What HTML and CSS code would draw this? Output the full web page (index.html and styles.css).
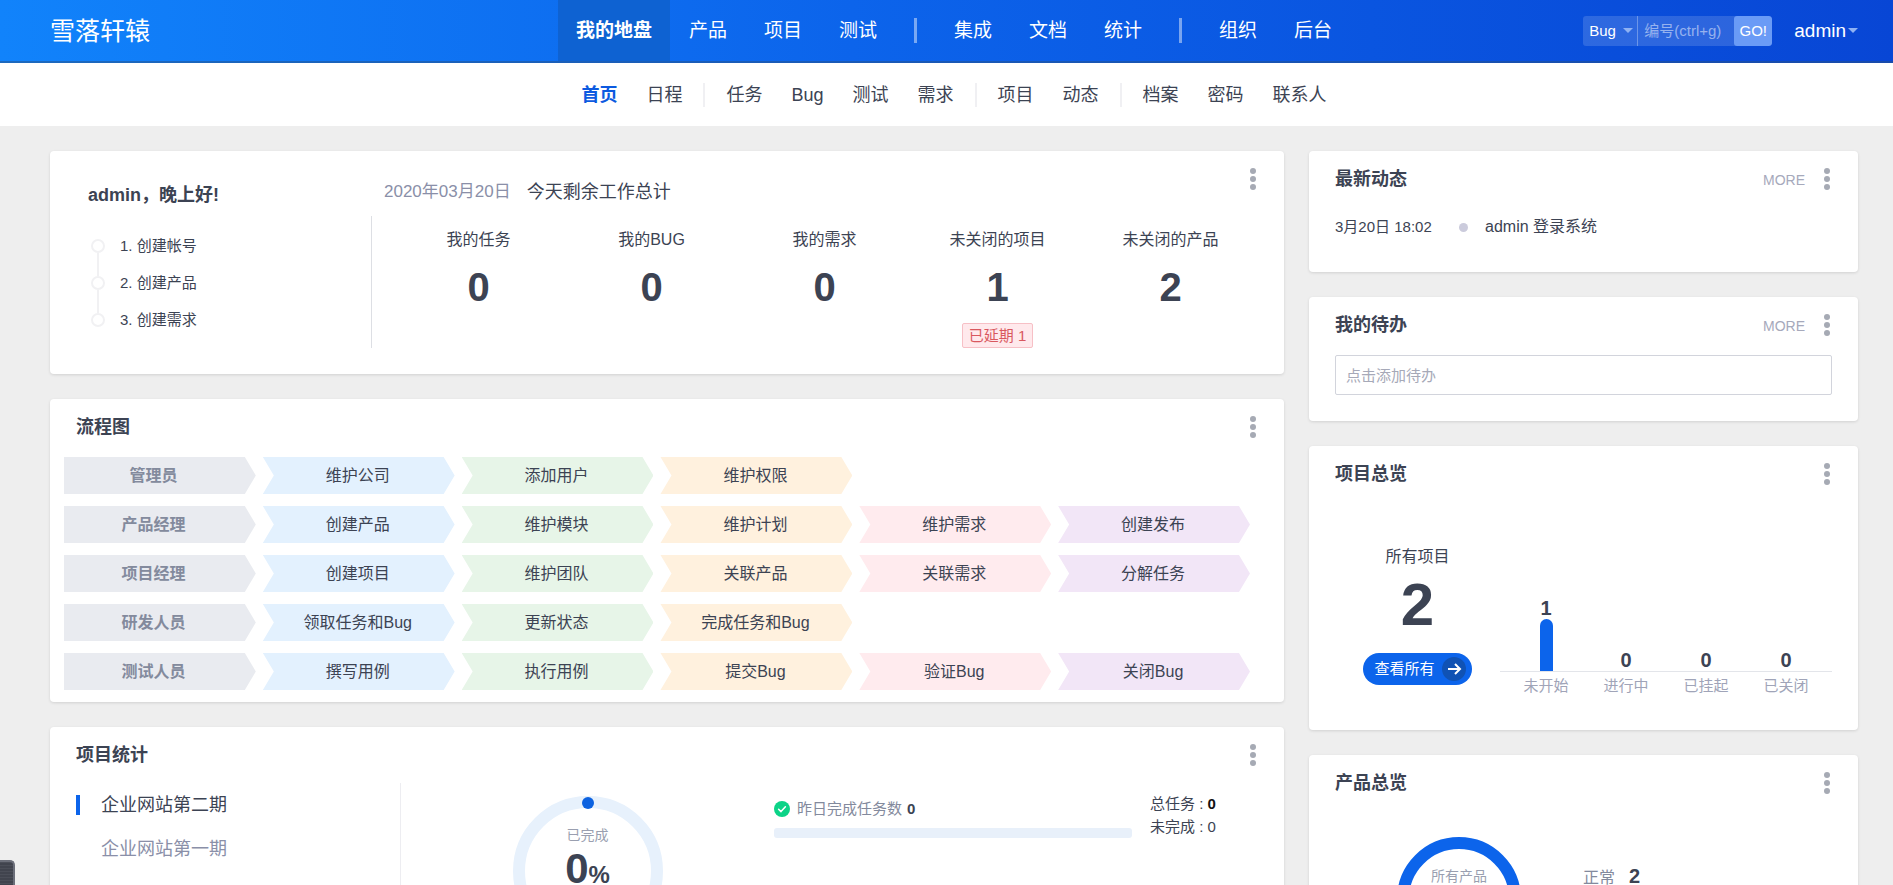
FILE: index.html
```html
<!DOCTYPE html>
<html lang="zh-CN">
<head>
<meta charset="utf-8">
<title>我的地盘</title>
<link rel="stylesheet" href="styles.css">
</head>
<body>
<header class="topbar">
  <a class="brand" href="#">雪落轩辕</a>
  <nav class="mainnav" aria-label="主导航">
    <a class="active" href="#">我的地盘</a>
    <a href="#">产品</a>
    <a href="#">项目</a>
    <a href="#">测试</a>
    <span class="sep"></span>
    <a href="#">集成</a>
    <a href="#">文档</a>
    <a href="#">统计</a>
    <span class="sep"></span>
    <a href="#">组织</a>
    <a href="#">后台</a>
  </nav>
  <div class="tools">
    <form class="search">
      <div class="kind">
        <select aria-label="类型"><option>Bug</option></select>
        <span class="caret"></span>
      </div>
      <input type="text" aria-label="编号" placeholder="编号(ctrl+g)">
      <button type="button">GO!</button>
    </form>
    <button class="user" type="button">admin<span class="caret"></span></button>
  </div>
</header>
<nav class="subnav" aria-label="子导航">
  <a class="active" href="#">首页</a>
  <a href="#">日程</a>
  <span class="sep"></span>
  <a href="#">任务</a>
  <a href="#">Bug</a>
  <a href="#">测试</a>
  <a href="#">需求</a>
  <span class="sep"></span>
  <a href="#">项目</a>
  <a href="#">动态</a>
  <span class="sep"></span>
  <a href="#">档案</a>
  <a href="#">密码</a>
  <a href="#">联系人</a>
</nav>

<main class="board">
  <div class="col">
    <section class="card welcome">
      <div class="greet">
        <h2>admin，晚上好!</h2>
        <ol class="steps">
          <li>1. 创建帐号</li>
          <li>2. 创建产品</li>
          <li>3. 创建需求</li>
        </ol>
      </div>
      <div class="summary">
        <p class="today"><time>2020年03月20日</time><span>今天剩余工作总计</span></p>
        <div class="tiles">
          <div class="tile"><span>我的任务</span><strong>0</strong></div>
          <div class="tile"><span>我的BUG</span><strong>0</strong></div>
          <div class="tile"><span>我的需求</span><strong>0</strong></div>
          <div class="tile"><span>未关闭的项目</span><strong>1</strong><em class="late">已延期 1</em></div>
          <div class="tile"><span>未关闭的产品</span><strong>2</strong></div>
        </div>
      </div>
      <button class="dots" type="button" aria-label="更多操作"><i></i><i></i><i></i></button>
    </section>

    <section class="card">
      <div class="head"><h2>流程图</h2><button class="dots" type="button" aria-label="更多操作"><i></i><i></i><i></i></button></div>
      <div class="flow">
        <div class="lane"><b>管理员</b><a href="#">维护公司</a><a href="#">添加用户</a><a href="#">维护权限</a></div>
        <div class="lane"><b>产品经理</b><a href="#">创建产品</a><a href="#">维护模块</a><a href="#">维护计划</a><a href="#">维护需求</a><a href="#">创建发布</a></div>
        <div class="lane"><b>项目经理</b><a href="#">创建项目</a><a href="#">维护团队</a><a href="#">关联产品</a><a href="#">关联需求</a><a href="#">分解任务</a></div>
        <div class="lane"><b>研发人员</b><a href="#">领取任务和Bug</a><a href="#">更新状态</a><a href="#">完成任务和Bug</a></div>
        <div class="lane"><b>测试人员</b><a href="#">撰写用例</a><a href="#">执行用例</a><a href="#">提交Bug</a><a href="#">验证Bug</a><a href="#">关闭Bug</a></div>
      </div>
    </section>

    <section class="card">
      <div class="head"><h2>项目统计</h2><button class="dots" type="button" aria-label="更多操作"><i></i><i></i><i></i></button></div>
      <div class="stats">
        <ul class="projects">
          <li><a class="active" href="#">企业网站第二期</a></li>
          <li><a href="#">企业网站第一期</a></li>
        </ul>
        <div class="ringbox">
          <div class="ring">
            <svg viewBox="0 0 150 150" aria-hidden="true"><circle cx="75" cy="75" r="69" fill="none" stroke="#e7f1fc" stroke-width="12"/><circle cx="75" cy="7" r="6" fill="#0c62e0"/></svg>
            <div class="ringtext"><small>已完成</small><strong>0<sub>%</sub></strong></div>
          </div>
        </div>
        <div class="done">
          <p><svg class="tick" viewBox="0 0 16 16" aria-hidden="true"><circle cx="8" cy="8" r="8" fill="#0cd387"/><path d="M4.6 8.2 7 10.6 11.4 5.8" fill="none" stroke="#fff" stroke-width="1.5" stroke-linecap="round" stroke-linejoin="round"/></svg>昨日完成任务数 <b>0</b></p>
          <div class="bar"></div>
        </div>
        <div class="totals">
          <p>总任务 : <b>0</b></p>
          <p>未完成 : 0</p>
        </div>
      </div>
    </section>
  </div>

  <div class="col">
    <section class="card news">
      <div class="head"><h2>最新动态</h2><a class="more" href="#">MORE</a><button class="dots" type="button" aria-label="更多操作"><i></i><i></i><i></i></button></div>
      <p class="event"><time>3月20日 18:02</time><i></i><a href="#">admin 登录系统</a></p>
    </section>

    <section class="card todo">
      <div class="head"><h2>我的待办</h2><a class="more" href="#">MORE</a><button class="dots" type="button" aria-label="更多操作"><i></i><i></i><i></i></button></div>
      <div class="field"><input type="text" aria-label="添加待办" placeholder="点击添加待办"></div>
    </section>

    <section class="card">
      <div class="head"><h2>项目总览</h2><button class="dots" type="button" aria-label="更多操作"><i></i><i></i><i></i></button></div>
      <div class="overview">
        <div class="all">
          <span>所有项目</span>
          <strong>2</strong>
          <a class="pill" href="#">查看所有<svg viewBox="0 0 24 24" aria-hidden="true"><circle cx="12" cy="12" r="12" fill="#1052b4"/><path d="M6 12h12M13 7l5 5-5 5" fill="none" stroke="#fff" stroke-width="2"/></svg></a>
        </div>
        <div class="chart">
          <div class="plot">
            <div class="bin"><b>1</b><i style="height:52px"></i></div>
            <div class="bin"><b>0</b></div>
            <div class="bin"><b>0</b></div>
            <div class="bin"><b>0</b></div>
          </div>
          <div class="labels"><span>未开始</span><span>进行中</span><span>已挂起</span><span>已关闭</span></div>
        </div>
      </div>
    </section>

    <section class="card">
      <div class="head"><h2>产品总览</h2><button class="dots" type="button" aria-label="更多操作"><i></i><i></i><i></i></button></div>
      <div class="products">
        <div class="donut">
          <svg viewBox="0 0 124 124" aria-hidden="true"><circle cx="62" cy="62" r="56" fill="none" stroke="#0c64eb" stroke-width="12"/></svg>
          <div class="donuttext"><small>所有产品</small><strong>2</strong></div>
        </div>
        <p class="legend">正常<b>2</b></p>
      </div>
    </section>
  </div>
</main>
<div class="sidetab"></div>
</body>
</html>
```
FILE: styles.css
```css
*, *::before, *::after { box-sizing: border-box; }
body {
  margin: 0;
  background: #eeeeee;
  color: #3c4353;
  font: 16px/24px "Liberation Sans", "Noto Sans CJK SC", sans-serif;
}
h2, p, ol, ul { margin: 0; padding: 0; list-style: none; }
h2 { font-size: 18px; line-height: 24px; }
a { color: inherit; text-decoration: none; }
button, input, select { font: inherit; color: inherit; border: 0; padding: 0; background: none; }
i, em { font-style: normal; }
svg { display: block; }

.topbar {
  display: grid;
  grid-template-columns: 1fr auto 1fr;
  align-items: center;
  height: 63px;
  padding: 0 35px 0 50px;
  color: #fff;
  background: linear-gradient(90deg, #1183fb 0%, #0c64eb 45%, #0846d5 100%);
  background-origin: border-box;
  border-bottom: 2px solid rgba(40, 80, 130, .5);
}
.brand { font-size: 25px; }
.mainnav { display: flex; align-items: center; gap: 1px; font-size: 19px; line-height: 61px; }
.mainnav a { padding: 0 18px; }
.mainnav .active { background: #0e62d2; font-weight: bold; }
.mainnav .sep { width: 3px; height: 25px; margin: 0 18px; background: rgba(255, 255, 255, .45); }
.tools { display: flex; justify-content: flex-end; align-items: center; gap: 22px; }
.caret { border: 5px solid transparent; border-top-color: #8fb2f3; border-bottom: 0; }
.search { display: flex; height: 30px; font-size: 15px; border-radius: 3px; overflow: hidden; background: rgba(255, 255, 255, .15); }
.kind { display: grid; align-items: center; width: 55px; border-right: 1px solid rgba(255, 255, 255, .3); }
.kind > * { grid-area: 1 / 1; }
.kind select { width: 100%; height: 30px; padding: 0 6px; appearance: none; }
.kind .caret { justify-self: end; margin-right: 4px; pointer-events: none; }
.search input { width: 96px; padding: 0 6px; }
.search input::placeholder { color: rgba(255, 255, 255, .5); opacity: 1; }
.search button { width: 38px; background: #6a9bf6; border-radius: 3px; }
.user { display: flex; align-items: center; gap: 2px; font-size: 19px; }

.subnav {
  display: flex;
  justify-content: center;
  align-items: center;
  gap: 1px;
  height: 63px;
  padding: 0 35px 0 50px;
  background: #fff;
  font-size: 18px;
}
.subnav a { padding: 0 14px; }
.subnav .active { color: #0c5ae0; font-weight: bold; }
.subnav .sep { width: 2px; height: 24px; margin: 0 6px; background: #f0f0f3; }

.board { display: grid; grid-template-columns: 1234fr 549fr; gap: 25px; padding: 25px 35px 25px 50px; }
.col { display: flex; flex-direction: column; gap: 25px; min-width: 0; }
.card { background: #fff; border-radius: 4px; box-shadow: 0 1px 3px rgba(0, 0, 0, .12); }
.head { display: flex; align-items: center; height: 56px; padding: 0 25px 0 26px; }
.head h2 { flex: 1; }
.dots { display: flex; flex-direction: column; align-items: center; gap: 2px; width: 12px; margin-left: 16px; }
.dots i { width: 6px; height: 6px; border-radius: 3px; background: #a6aab4; }
.more { font-size: 14px; line-height: 22px; padding-top: 2px; color: #a6a9bb; }

.welcome { display: flex; height: 223px; padding: 17px 25px 28px 38px; }
.greet { display: flex; flex-direction: column; width: 283px; padding-top: 15px; }
.steps { display: flex; flex-direction: column; gap: 13px; margin-top: 27px; font-size: 15px; }
.steps li { position: relative; padding-left: 32px; }
.steps li::before { content: ""; position: absolute; left: 3px; top: 5px; width: 14px; height: 14px; border: 2px solid #f1f1f3; border-radius: 7px; }
.steps li + li::after { content: ""; position: absolute; left: 9px; top: -18px; width: 2px; height: 23px; background: #f1f1f3; }
.summary { flex: 1; display: flex; flex-direction: column; }
.today { display: flex; gap: 16px; padding: 12px 0 12px 13px; font-size: 18px; }
.today time { font-size: 17px; color: #8a8fa8; }
.tiles { flex: 1; display: grid; grid-template-columns: repeat(5, 1fr); padding: 12px 2px 0 20px; border-left: 1px solid #dddfe4; }
.tile { display: flex; flex-direction: column; align-items: center; }
.tile strong { font-size: 40px; line-height: 48px; margin: 11px 0 12px; }
.late { font-size: 15px; line-height: 23px; padding: 0 6px; color: #d9585f; background: #ffe9ec; border: 1px solid #f7c0c6; border-radius: 2px; }
.welcome .dots { align-self: flex-start; margin-left: -12px; }

.flow { display: grid; gap: 12px; padding: 2px 34px 12px 14px; }
.lane { display: grid; grid-template-columns: repeat(6, 1fr); gap: 7px; text-align: center; line-height: 37px; }
.lane b { padding-right: 13px; color: #838a9d; background: #e9ebf0; clip-path: polygon(0 0, calc(100% - 11px) 0, 100% 50%, calc(100% - 11px) 100%, 0 100%); }
.lane a { padding-right: 2px; clip-path: polygon(0 0, calc(100% - 11px) 0, 100% 50%, calc(100% - 11px) 100%, 0 100%, 11px 50%); }
.lane a:nth-child(2) { background: #e3f1fe; }
.lane a:nth-child(3) { background: #e7f5e8; }
.lane a:nth-child(4) { background: #fff1de; }
.lane a:nth-child(5) { background: #ffebee; }
.lane a:nth-child(6) { background: #f2e6f7; }

.stats { display: grid; grid-template-columns: 351px 373px 1fr 152px; min-height: 190px; padding-bottom: 20px; }
.projects { display: grid; align-content: start; gap: 24px; padding: 12px 0 0 26px; border-right: 1px solid #ededf1; font-size: 18px; line-height: 20px; }
.projects a { display: block; padding-left: 21px; border-left: 4px solid transparent; color: #8a8fa8; }
.projects .active { border-color: #0c64eb; color: #3c4353; }
.ringbox { display: flex; justify-content: center; padding-top: 13px; }
.ring, .donut { position: relative; width: 150px; height: 150px; }
.ringtext, .donuttext { position: absolute; inset: 0; display: flex; flex-direction: column; align-items: center; }
.ringtext { padding-top: 27px; }
.ringtext small, .donuttext small { font-size: 14px; line-height: 24px; color: #9a9fb0; }
.ringtext strong { font-size: 42px; line-height: 44px; }
.ringtext sub { font-size: 24px; vertical-align: baseline; }
.done { padding-top: 15px; font-size: 15px; color: #838a9d; }
.done p { display: flex; align-items: center; gap: 5px; line-height: 22px; }
.done b { color: #3c4353; }
.tick { width: 16px; height: 16px; margin-right: 2px; }
.bar { height: 10px; margin-top: 8px; border-radius: 3px; background: #e8f0fa; }
.totals { padding: 9px 0 0 18px; font-size: 15px; line-height: 23px; }
.totals b { color: #111; }

.news { padding-bottom: 33px; }
.event { display: flex; align-items: center; padding: 8px 26px 0; }
.event time { width: 124px; font-size: 15px; }
.event i { width: 9px; height: 9px; margin-right: 17px; border-radius: 5px; background: #cbcbdc; }
.todo .field { padding: 2px 26px 26px; }
.field input { display: block; width: 100%; height: 40px; padding: 0 10px; font-size: 15px; border: 1px solid #d2d4dc; border-radius: 2px; }
.field input::placeholder { color: #a6a9b8; opacity: 1; }
.overview { display: flex; height: 228px; padding: 43px 26px 0; }
.all { display: flex; flex-direction: column; align-items: center; width: 165px; }
.all strong { font-size: 60px; line-height: 72px; }
.pill { display: flex; align-items: center; gap: 7px; height: 32px; margin-top: 12px; padding: 0 6px 0 11px; border-radius: 16px; color: #fff; background: #0c64eb; font-size: 15px; }
.pill svg { width: 24px; height: 24px; }
.chart { flex: 1; }
.plot { display: flex; height: 127px; padding: 0 6px; border-bottom: 1px solid #e3e5ea; }
.bin { flex: 1; display: flex; flex-direction: column; justify-content: flex-end; align-items: center; }
.bin b { font-size: 20px; line-height: 22px; }
.bin i { width: 13px; border-radius: 7px 7px 0 0; background: #0c64eb; }
.labels { display: flex; padding: 2px 6px 0; font-size: 15px; color: #a0a4b8; }
.labels span { flex: 1; text-align: center; }
.products { display: flex; gap: 62px; padding: 26px 26px 40px 88px; }
.donut { width: 124px; height: 124px; }
.donuttext { padding-top: 27px; }
.donuttext strong { font-size: 36px; line-height: 40px; }
.legend { padding-top: 27px; color: #838a9d; }
.legend b { margin-left: 14px; font-size: 20px; color: #3c4353; }

.sidetab { position: fixed; left: 0; bottom: 0; width: 15px; height: 25px; border: 2px solid #6b6e79; border-width: 2px 2px 0 0; border-radius: 0 5px 0 0; background: repeating-linear-gradient(#4b4e58 0 1px, #41444e 1px 3px); }
```
